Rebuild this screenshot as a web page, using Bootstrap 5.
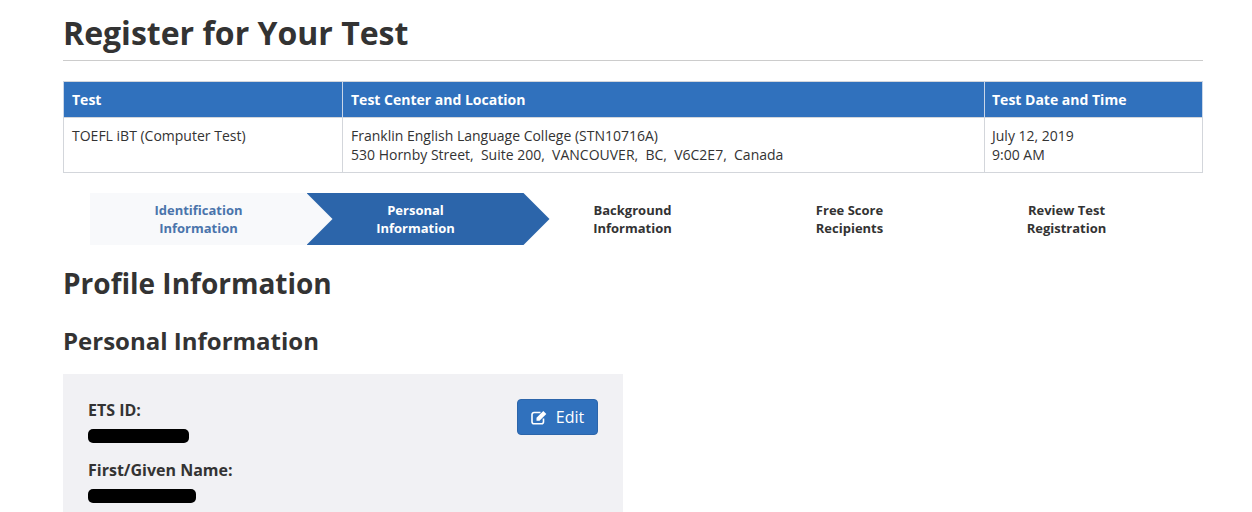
<!DOCTYPE html>
<html lang="en">
<head>
    <meta charset="UTF-8">
    <meta name="viewport" content="width=device-width, initial-scale=1.0">
    <title>Register for Your Test</title>
    <link rel="stylesheet" href="https://cdn.jsdelivr.net/npm/bootstrap@5.3.0/dist/css/bootstrap.min.css">
    <style>
        body { font-family: "Open Sans", "Liberation Sans", sans-serif; font-size: 14px; color: #333; background: #fff; overflow: hidden; }
        .page-wrap { width: 1140px; margin-left: 63px; }
        .page-title { font-size: 32px; font-weight: 700; line-height: 44px; margin: 0; padding-top: 11px; padding-bottom: 5px; border-bottom: 1px solid #ccc; color: #333; }
        .test-table { margin: 20px 0 0; width: 100%; table-layout: fixed; border-color: #d3d6db; }
        .test-table th { background: #3071bd; color: #fff; font-size: 14px; font-weight: 700; padding: 8px 8px; line-height: 19px; border-color: #c9d6e8; }
        .test-table td { padding: 8px 8px; line-height: 19px; color: #333; height: 55px; vertical-align: top; }
        .test-table tr > :nth-child(3) { padding-left: 7px; }
        .step-row { display: flex; margin: 20px 0 0 26.5px; height: 52px; }
        .step-item { position: relative; width: 217px; flex: none; display: flex; align-items: center; justify-content: center; text-align: center; font-size: 13px; font-weight: 700; line-height: 18px; color: #333; padding-left: 1px; }
        .step-done { background: #f8f9fb; color: #4a74ab; }
        .step-done::after { content: ""; position: absolute; left: 100%; top: 0; width: 26px; height: 100%; background: #f8f9fb; clip-path: polygon(0 0, 100% 50%, 0 100%); }
        .step-now { color: #fff; z-index: 1; }
        .step-now::before { content: ""; position: absolute; z-index: -1; top: 0; bottom: 0; left: 0; right: -26px; background: #2c65aa; clip-path: polygon(0 0, 217px 0, 100% 50%, 217px 100%, 0 100%, 26px 50%); }
        .sec-title { font-size: 28px; font-weight: 700; line-height: 38px; margin: 19px 0 0; color: #333; }
        .sub-title { font-size: 24px; font-weight: 700; line-height: 32px; margin: 23px 0 0; color: #333; }
        .info-box { width: 560px; background: #f1f1f4; margin-top: 17px; padding: 25px; height: 200px; }
        .info-label { font-weight: 700; font-size: 16px; line-height: 22px; }
        .hidden-mark { background: #000; border-radius: 5px; height: 14px; margin-top: 8px; margin-bottom: 16px; }
        .edit-btn { background: #3071bd; border: 1px solid #2c65aa; color: #fff; font-size: 16px; width: 81px; height: 36px; padding: 0; border-radius: 4px; }
    </style>
</head>
<body>
    <div class="page-wrap">
        <h1 class="page-title">Register for Your Test</h1>

        <!-- Test summary -->
        <table class="table table-bordered test-table">
            <colgroup>
                <col style="width: 279px">
                <col style="width: 642px">
                <col>
            </colgroup>
            <thead>
                <tr>
                    <th>Test</th>
                    <th>Test Center and Location</th>
                    <th>Test Date and Time</th>
                </tr>
            </thead>
            <tbody>
                <tr>
                    <td>TOEFL iBT (Computer Test)</td>
                    <td>Franklin English Language College (STN10716A)<br>530 Hornby Street,&nbsp; Suite 200,&nbsp; VANCOUVER,&nbsp; BC,&nbsp; V6C2E7,&nbsp; Canada</td>
                    <td>July 12, 2019<br>9:00 AM</td>
                </tr>
            </tbody>
        </table>

        <!-- Steps -->
        <div class="step-row">
            <div class="step-item step-done">Identification<br>Information</div>
            <div class="step-item step-now">Personal<br>Information</div>
            <div class="step-item">Background<br>Information</div>
            <div class="step-item">Free Score<br>Recipients</div>
            <div class="step-item">Review Test<br>Registration</div>
        </div>

        <h2 class="sec-title">Profile Information</h2>
        <h3 class="sub-title">Personal Information</h3>

        <div class="info-box d-flex justify-content-between align-items-start">
            <div>
                <div class="info-label">ETS ID:</div>
                <div class="hidden-mark" style="width: 101px"></div>
                <div class="info-label">First/Given Name:</div>
                <div class="hidden-mark" style="width: 108px"></div>
            </div>
            <button class="btn edit-btn d-flex align-items-center justify-content-center gap-2" type="button">
                <svg width="17" height="15" viewBox="0 0 17 15" fill="none" aria-hidden="true">
                    <path d="M12.5 8.5v3.2a2 2 0 0 1-2 2H3a2 2 0 0 1-2-2V4.5a2 2 0 0 1 2-2h6.5" stroke="#fff" stroke-width="1.6"/>
                    <path d="M5.5 7.8 12.3 1l3 3-6.8 6.8H5.5z" fill="#fff"/>
                </svg>
                Edit
            </button>
        </div>
    </div>
</body>
</html>
